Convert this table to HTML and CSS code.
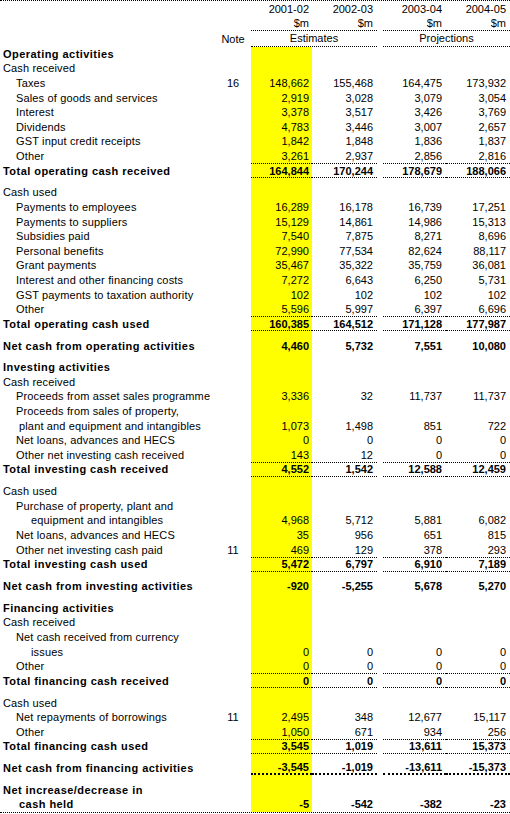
FILE: index.html
```html
<!DOCTYPE html>
<html lang="en">
<head>
    <meta charset="UTF-8">
    <title>Cash flow statement - Estimates and projections</title>
    <link rel="stylesheet" href="styles.css">
</head>
<body>
<table class="cashflow">
    <colgroup>
        <col class="w-lbl"><col class="w-note"><col class="w-a"><col class="w-b"><col class="w-sp"><col class="w-c"><col class="w-d">
    </colgroup>
    <thead>
        <tr>
            <th class="lbl"></th><th class="note"></th>
            <th class="a">2001-02</th><th class="b">2002-03</th><th class="sp"></th><th class="c">2003-04</th><th class="d">2004-05</th>
        </tr>
        <tr class="units">
            <th class="lbl"></th><th class="note"></th>
            <th class="a">$m</th><th class="b">$m</th><th class="sp"></th><th class="c">$m</th><th class="d">$m</th>
        </tr>
        <tr class="kind">
            <th class="lbl"></th><th class="note">Note</th>
            <th class="span" colspan="2">Estimates</th><th class="sp"></th><th class="span" colspan="2">Projections</th>
        </tr>
    </thead>
    <tbody>
        <!-- Operating -->
        <tr class="sect"><td class="lbl">Operating activities</td><td class="note"></td><td class="a"></td><td class="b"></td><td class="sp"></td><td class="c"></td><td class="d"></td></tr>
        <tr><td class="lbl">Cash received</td><td class="note"></td><td class="a"></td><td class="b"></td><td class="sp"></td><td class="c"></td><td class="d"></td></tr>
        <tr><td class="lbl i1">Taxes</td><td class="note">16</td><td class="a">148,662</td><td class="b">155,468</td><td class="sp"></td><td class="c">164,475</td><td class="d">173,932</td></tr>
        <tr><td class="lbl i1">Sales of goods and services</td><td class="note"></td><td class="a">2,919</td><td class="b">3,028</td><td class="sp"></td><td class="c">3,079</td><td class="d">3,054</td></tr>
        <tr><td class="lbl i1">Interest</td><td class="note"></td><td class="a">3,378</td><td class="b">3,517</td><td class="sp"></td><td class="c">3,426</td><td class="d">3,769</td></tr>
        <tr><td class="lbl i1">Dividends</td><td class="note"></td><td class="a">4,783</td><td class="b">3,446</td><td class="sp"></td><td class="c">3,007</td><td class="d">2,657</td></tr>
        <tr><td class="lbl i1">GST input credit receipts</td><td class="note"></td><td class="a">1,842</td><td class="b">1,848</td><td class="sp"></td><td class="c">1,836</td><td class="d">1,837</td></tr>
        <tr><td class="lbl i1">Other</td><td class="note"></td><td class="a">3,261</td><td class="b">2,937</td><td class="sp"></td><td class="c">2,856</td><td class="d">2,816</td></tr>
        <tr class="total"><td class="lbl">Total operating cash received</td><td class="note"></td><td class="a">164,844</td><td class="b">170,244</td><td class="sp"></td><td class="c">178,679</td><td class="d">188,066</td></tr>
        <tr class="gap"><td class="lbl"></td><td class="note"></td><td class="a"></td><td class="b"></td><td class="sp"></td><td class="c"></td><td class="d"></td></tr>
        <tr><td class="lbl">Cash used</td><td class="note"></td><td class="a"></td><td class="b"></td><td class="sp"></td><td class="c"></td><td class="d"></td></tr>
        <tr><td class="lbl i1">Payments to employees</td><td class="note"></td><td class="a">16,289</td><td class="b">16,178</td><td class="sp"></td><td class="c">16,739</td><td class="d">17,251</td></tr>
        <tr><td class="lbl i1">Payments to suppliers</td><td class="note"></td><td class="a">15,129</td><td class="b">14,861</td><td class="sp"></td><td class="c">14,986</td><td class="d">15,313</td></tr>
        <tr><td class="lbl i1">Subsidies paid</td><td class="note"></td><td class="a">7,540</td><td class="b">7,875</td><td class="sp"></td><td class="c">8,271</td><td class="d">8,696</td></tr>
        <tr><td class="lbl i1">Personal benefits</td><td class="note"></td><td class="a">72,990</td><td class="b">77,534</td><td class="sp"></td><td class="c">82,624</td><td class="d">88,117</td></tr>
        <tr><td class="lbl i1">Grant payments</td><td class="note"></td><td class="a">35,467</td><td class="b">35,322</td><td class="sp"></td><td class="c">35,759</td><td class="d">36,081</td></tr>
        <tr><td class="lbl i1">Interest and other financing costs</td><td class="note"></td><td class="a">7,272</td><td class="b">6,643</td><td class="sp"></td><td class="c">6,250</td><td class="d">5,731</td></tr>
        <tr><td class="lbl i1">GST payments to taxation authority</td><td class="note"></td><td class="a">102</td><td class="b">102</td><td class="sp"></td><td class="c">102</td><td class="d">102</td></tr>
        <tr><td class="lbl i1">Other</td><td class="note"></td><td class="a">5,596</td><td class="b">5,997</td><td class="sp"></td><td class="c">6,397</td><td class="d">6,696</td></tr>
        <tr class="total"><td class="lbl">Total operating cash used</td><td class="note"></td><td class="a">160,385</td><td class="b">164,512</td><td class="sp"></td><td class="c">171,128</td><td class="d">177,987</td></tr>
        <tr class="gap"><td class="lbl"></td><td class="note"></td><td class="a"></td><td class="b"></td><td class="sp"></td><td class="c"></td><td class="d"></td></tr>
        <tr class="net"><td class="lbl">Net cash from operating activities</td><td class="note"></td><td class="a">4,460</td><td class="b">5,732</td><td class="sp"></td><td class="c">7,551</td><td class="d">10,080</td></tr>
        <tr class="gap"><td class="lbl"></td><td class="note"></td><td class="a"></td><td class="b"></td><td class="sp"></td><td class="c"></td><td class="d"></td></tr>

        <!-- Investing -->
        <tr class="sect"><td class="lbl">Investing activities</td><td class="note"></td><td class="a"></td><td class="b"></td><td class="sp"></td><td class="c"></td><td class="d"></td></tr>
        <tr><td class="lbl">Cash received</td><td class="note"></td><td class="a"></td><td class="b"></td><td class="sp"></td><td class="c"></td><td class="d"></td></tr>
        <tr><td class="lbl i1">Proceeds from asset sales programme</td><td class="note"></td><td class="a">3,336</td><td class="b">32</td><td class="sp"></td><td class="c">11,737</td><td class="d">11,737</td></tr>
        <tr><td class="lbl i1">Proceeds from sales of property,</td><td class="note"></td><td class="a"></td><td class="b"></td><td class="sp"></td><td class="c"></td><td class="d"></td></tr>
        <tr><td class="lbl i1b">plant and equipment and intangibles</td><td class="note"></td><td class="a">1,073</td><td class="b">1,498</td><td class="sp"></td><td class="c">851</td><td class="d">722</td></tr>
        <tr><td class="lbl i1">Net loans, advances and HECS</td><td class="note"></td><td class="a">0</td><td class="b">0</td><td class="sp"></td><td class="c">0</td><td class="d">0</td></tr>
        <tr><td class="lbl i1">Other net investing cash received</td><td class="note"></td><td class="a">143</td><td class="b">12</td><td class="sp"></td><td class="c">0</td><td class="d">0</td></tr>
        <tr class="total"><td class="lbl">Total investing cash received</td><td class="note"></td><td class="a">4,552</td><td class="b">1,542</td><td class="sp"></td><td class="c">12,588</td><td class="d">12,459</td></tr>
        <tr class="gap"><td class="lbl"></td><td class="note"></td><td class="a"></td><td class="b"></td><td class="sp"></td><td class="c"></td><td class="d"></td></tr>
        <tr><td class="lbl">Cash used</td><td class="note"></td><td class="a"></td><td class="b"></td><td class="sp"></td><td class="c"></td><td class="d"></td></tr>
        <tr><td class="lbl i1">Purchase of property, plant and</td><td class="note"></td><td class="a"></td><td class="b"></td><td class="sp"></td><td class="c"></td><td class="d"></td></tr>
        <tr><td class="lbl i2">equipment and intangibles</td><td class="note"></td><td class="a">4,968</td><td class="b">5,712</td><td class="sp"></td><td class="c">5,881</td><td class="d">6,082</td></tr>
        <tr><td class="lbl i1">Net loans, advances and HECS</td><td class="note"></td><td class="a">35</td><td class="b">956</td><td class="sp"></td><td class="c">651</td><td class="d">815</td></tr>
        <tr><td class="lbl i1">Other net investing cash paid</td><td class="note">11</td><td class="a">469</td><td class="b">129</td><td class="sp"></td><td class="c">378</td><td class="d">293</td></tr>
        <tr class="total"><td class="lbl">Total investing cash used</td><td class="note"></td><td class="a">5,472</td><td class="b">6,797</td><td class="sp"></td><td class="c">6,910</td><td class="d">7,189</td></tr>
        <tr class="gap"><td class="lbl"></td><td class="note"></td><td class="a"></td><td class="b"></td><td class="sp"></td><td class="c"></td><td class="d"></td></tr>
        <tr class="net"><td class="lbl">Net cash from investing activities</td><td class="note"></td><td class="a">-920</td><td class="b">-5,255</td><td class="sp"></td><td class="c">5,678</td><td class="d">5,270</td></tr>
        <tr class="gap"><td class="lbl"></td><td class="note"></td><td class="a"></td><td class="b"></td><td class="sp"></td><td class="c"></td><td class="d"></td></tr>

        <!-- Financing -->
        <tr class="sect"><td class="lbl">Financing activities</td><td class="note"></td><td class="a"></td><td class="b"></td><td class="sp"></td><td class="c"></td><td class="d"></td></tr>
        <tr><td class="lbl">Cash received</td><td class="note"></td><td class="a"></td><td class="b"></td><td class="sp"></td><td class="c"></td><td class="d"></td></tr>
        <tr><td class="lbl i1">Net cash received from currency</td><td class="note"></td><td class="a"></td><td class="b"></td><td class="sp"></td><td class="c"></td><td class="d"></td></tr>
        <tr><td class="lbl i2">issues</td><td class="note"></td><td class="a">0</td><td class="b">0</td><td class="sp"></td><td class="c">0</td><td class="d">0</td></tr>
        <tr><td class="lbl i1">Other</td><td class="note"></td><td class="a">0</td><td class="b">0</td><td class="sp"></td><td class="c">0</td><td class="d">0</td></tr>
        <tr class="total"><td class="lbl">Total financing cash received</td><td class="note"></td><td class="a">0</td><td class="b">0</td><td class="sp"></td><td class="c">0</td><td class="d">0</td></tr>
        <tr class="gap"><td class="lbl"></td><td class="note"></td><td class="a"></td><td class="b"></td><td class="sp"></td><td class="c"></td><td class="d"></td></tr>
        <tr><td class="lbl">Cash used</td><td class="note"></td><td class="a"></td><td class="b"></td><td class="sp"></td><td class="c"></td><td class="d"></td></tr>
        <tr><td class="lbl i1">Net repayments of borrowings</td><td class="note">11</td><td class="a">2,495</td><td class="b">348</td><td class="sp"></td><td class="c">12,677</td><td class="d">15,117</td></tr>
        <tr><td class="lbl i1">Other</td><td class="note"></td><td class="a">1,050</td><td class="b">671</td><td class="sp"></td><td class="c">934</td><td class="d">256</td></tr>
        <tr class="total"><td class="lbl">Total financing cash used</td><td class="note"></td><td class="a">3,545</td><td class="b">1,019</td><td class="sp"></td><td class="c">13,611</td><td class="d">15,373</td></tr>
        <tr class="gap"><td class="lbl"></td><td class="note"></td><td class="a"></td><td class="b"></td><td class="sp"></td><td class="c"></td><td class="d"></td></tr>
        <tr class="net double"><td class="lbl">Net cash from financing activities</td><td class="note"></td><td class="a">-3,545</td><td class="b">-1,019</td><td class="sp"></td><td class="c">-13,611</td><td class="d">-15,373</td></tr>
        <tr class="gap"><td class="lbl"></td><td class="note"></td><td class="a"></td><td class="b"></td><td class="sp"></td><td class="c"></td><td class="d"></td></tr>

        <tr class="net"><td class="lbl">Net increase/decrease in</td><td class="note"></td><td class="a"></td><td class="b"></td><td class="sp"></td><td class="c"></td><td class="d"></td></tr>
        <tr class="net"><td class="lbl i1b">cash held</td><td class="note"></td><td class="a">-5</td><td class="b">-542</td><td class="sp"></td><td class="c">-382</td><td class="d">-23</td></tr>
    </tbody>
</table>
</body>
</html>
```

FILE: styles.css
```css
body {
    margin: 0;
    font-family: "Liberation Sans", Arial, sans-serif;
    font-size: 11px;
    color: #000;
    background: #fff;
}
.cashflow {
    width: 510px;
    table-layout: fixed;
    border-collapse: separate;
    border-spacing: 0;
    border-top: 1px dotted #000;
    border-bottom: 1px dotted #000;
}
.w-lbl { width: 215px; }
.w-note { width: 36px; }
.w-a { width: 61px; }
.w-b { width: 65px; }
.w-sp { width: 6px; }
.w-c { width: 63px; }
.w-d { width: 64px; }

th, td {
    padding: 0;
    line-height: 12px;
    font-weight: normal;
    vertical-align: middle;
    white-space: nowrap;
}
thead tr {
    height: 15.2px;
}
tbody tr {
    height: 14.6px;
}
tbody tr.gap {
    height: 7.2px;
}

.lbl {
    padding-left: 3px;
    text-align: left;
    letter-spacing: .15px;
}
.lbl.i1 { padding-left: 16px; }
.lbl.i1b { padding-left: 19px; }
.lbl.i2 { padding-left: 31px; }
.note {
    text-align: center;
}
.a, .b, .c, .d {
    padding-right: 4px;
    text-align: right;
}
.a {
    padding-right: 3px;
}
th.span {
    text-align: center;
    border-bottom: 1px dotted #000;
}
tr.units .a, tr.units .b, tr.units .c, tr.units .d {
    border-bottom: 1px dotted #000;
}

tbody .a {
    background: #ffff00;
}

tr.sect td, tr.total td, tr.net td {
    font-weight: bold;
}
tr.sect .lbl, tr.total .lbl, tr.net .lbl {
    letter-spacing: .45px;
}
tr.total .a, tr.total .b, tr.total .c, tr.total .d {
    border-top: 1px dotted #000;
    border-bottom: 1px dotted #000;
}
tr.double .a, tr.double .b, tr.double .c, tr.double .d {
    border-bottom: 2px dotted #000;
}
```
